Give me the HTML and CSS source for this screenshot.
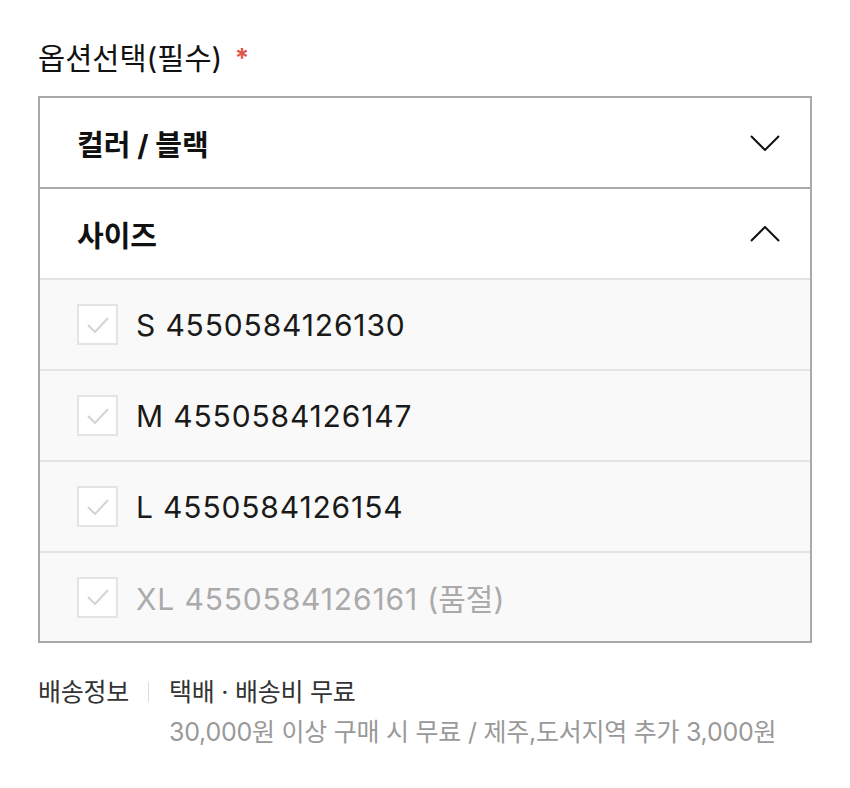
FILE: index.html
```html
<!DOCTYPE html>
<html lang="ko">
<head>
    <meta charset="UTF-8">
    <meta name="viewport" content="width=device-width, initial-scale=1.0">
    <title>옵션선택</title>
    <link rel="stylesheet" href="styles.css">
</head>
<body>

    <div class="option-area">
        <h2 class="option-title">옵션선택(필수) <span class="required">*</span></h2>

        <div class="option-box">
            <div class="option-head">
                <span>컬러 / 블랙</span>
                <svg class="chevron" width="30" height="16" viewBox="0 0 30 16"><polyline points="1,1 15,15 29,1" fill="none" stroke="#111" stroke-width="2"/></svg>
            </div>
            <div class="option-head">
                <span>사이즈</span>
                <svg class="chevron" width="30" height="16" viewBox="0 0 30 16"><polyline points="1,15 15,1 29,15" fill="none" stroke="#111" stroke-width="2"/></svg>
            </div>
            <div class="option-item">
                <span class="check"><svg width="22" height="16" viewBox="0 0 22 16"><polyline points="1,8 8,15 21,1" fill="none" stroke="#d4d4d4" stroke-width="2"/></svg></span>
                <span>S 4550584126130</span>
            </div>
            <div class="option-item">
                <span class="check"><svg width="22" height="16" viewBox="0 0 22 16"><polyline points="1,8 8,15 21,1" fill="none" stroke="#d4d4d4" stroke-width="2"/></svg></span>
                <span>M 4550584126147</span>
            </div>
            <div class="option-item">
                <span class="check"><svg width="22" height="16" viewBox="0 0 22 16"><polyline points="1,8 8,15 21,1" fill="none" stroke="#d4d4d4" stroke-width="2"/></svg></span>
                <span>L 4550584126154</span>
            </div>
            <div class="option-item soldout">
                <span class="check"><svg width="22" height="16" viewBox="0 0 22 16"><polyline points="1,8 8,15 21,1" fill="none" stroke="#d4d4d4" stroke-width="2"/></svg></span>
                <span>XL 4550584126161 <span class="status">(품절)</span></span>
            </div>
        </div>

        <div class="delivery">
            <span class="delivery-label">배송정보</span>
            <span class="bar"></span>
            <div class="delivery-info">
                <p class="delivery-main">택배 · 배송비 무료</p>
                <p class="delivery-sub">30,000원 이상 구매 시 무료 / 제주,도서지역 추가 3,000원</p>
            </div>
        </div>
    </div>

</body>
</html>
```

FILE: styles.css
```css
body {
    font-family: Inter, "Noto Sans CJK KR", sans-serif;
    background-color: #ffffff;
    color: #111;
    margin: 0;
    padding: 0 38px;
}

.option-title {
    font-size: 29.5px;
    font-weight: 400;
    margin: 0 0 18px 0;
    padding-top: 38px;
    line-height: 40px;
}

.required {
    color: #e3564e;
    font-size: 26px;
    font-weight: 700;
    vertical-align: top;
    margin-left: 4px;
}

.option-box {
    border: 2px solid #a9a9a9;
}

.option-head {
    display: flex;
    align-items: center;
    justify-content: space-between;
    height: 89px;
    padding: 0 30px 0 37px;
    font-size: 29px;
    font-weight: 700;
    border-bottom: 2px solid #a9a9a9;
}

.option-head + .option-head {
    border-bottom-color: #e4e4e4;
}

.option-item {
    display: flex;
    align-items: center;
    height: 89px;
    padding-left: 37px;
    background: #f9f9f9;
    font-size: 30px;
    letter-spacing: 0.85px;
    color: #1a1a1a;
    border-bottom: 2px solid #e4e4e4;
}

.option-item:last-child {
    border-bottom: none;
    height: 88px;
}

.status {
    letter-spacing: 0;
}

.check {
    display: flex;
    align-items: center;
    justify-content: center;
    width: 41px;
    height: 41px;
    box-sizing: border-box;
    border: 2px solid #e4e4e4;
    background: #fff;
    margin-right: 18px;
}

.soldout {
    color: #aaaaaa;
}

.delivery {
    display: flex;
    align-items: flex-start;
    margin-top: 29px;
    font-size: 25px;
    letter-spacing: -0.25px;
}

.delivery-label {
    color: #333;
    line-height: 40px;
}

.bar {
    width: 1px;
    height: 20px;
    background: #dcdcdc;
    margin: 10px 20px 0 19px;
}

.delivery-info p {
    margin: 0;
    line-height: 40px;
}

.delivery-main {
    color: #333;
}

.delivery-sub {
    color: #999;
}
```
